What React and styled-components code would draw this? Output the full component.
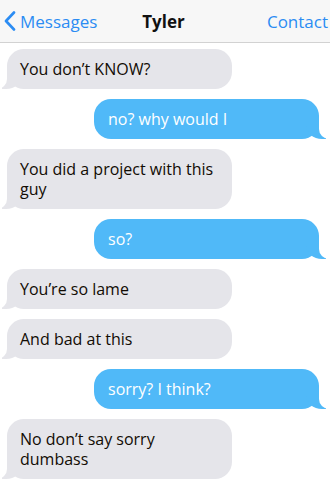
import React from "react";
import styled, { createGlobalStyle, css } from "styled-components";

const Global = createGlobalStyle`
  body {
    margin: 0;
    background: #fff;
    font-family: "Open Sans", "Noto Sans", sans-serif;
  }
`;

const Screen = styled.div`
  width: 330px;
  height: 486px;
  overflow: hidden;
  background: #fff;
`;

const Header = styled.header`
  height: 42px;
  display: flex;
  align-items: center;
  justify-content: space-between;
  background: #f7f7f7;
  border-bottom: 1px solid #d2d2d2;
  position: relative;
  font-size: 17px;
`;

const Back = styled.div`
  display: flex;
  align-items: center;
  gap: 4px;
  padding-left: 4px;
  color: #2b8cf3;
`;

const Title = styled.div`
  position: absolute;
  left: 0;
  right: 0;
  text-align: center;
  font-weight: 700;
  color: #111;
  pointer-events: none;
  padding-right: 3px;
`;

const Contact = styled.div`
  color: #2b8cf3;
  padding-right: 2px;
  white-space: nowrap;
`;

const Thread = styled.div`
  display: flex;
  flex-direction: column;
  gap: 10px;
  padding: 6px 11px 0 7px;
`;

const Bubble = styled.div`
  position: relative;
  width: 225px;
  box-sizing: border-box;
  padding: 10px 13px 10px 13px;
  font-size: 16px;
  line-height: 20px;
  border-radius: 17px;
  z-index: 0;

  &::before,
  &::after {
    content: "";
    position: absolute;
    bottom: 0;
    height: 20px;
    z-index: -1;
  }

  ${(p) =>
    p.$me
      ? css`
          align-self: flex-end;
          background: #50b9f8;
          color: #fff;
          padding-left: 14px;
          &::before {
            right: -7px;
            width: 20px;
            background: #50b9f8;
            border-bottom-left-radius: 16px 14px;
          }
          &::after {
            right: -10px;
            width: 10px;
            background: #fff;
            border-bottom-left-radius: 10px;
          }
        `
      : css`
          align-self: flex-start;
          background: #e5e5ea;
          color: #120c04;
          &::before {
            left: -5px;
            width: 20px;
            background: #e5e5ea;
            border-bottom-right-radius: 16px 14px;
          }
          &::after {
            left: -10px;
            width: 10px;
            background: #fff;
            border-bottom-right-radius: 10px;
          }
        `}
`;

const messages = [
  { me: false, text: "You don\u2019t KNOW?" },
  { me: true, text: "no? why would I" },
  { me: false, text: "You did a project with this guy" },
  { me: true, text: "so?" },
  { me: false, text: "You\u2019re so lame" },
  { me: false, text: "And bad at this" },
  { me: true, text: "sorry? I think?" },
  { me: false, text: "No don\u2019t say sorry dumbass" },
];

const App = () => {
  return (
    <Screen>
      <Global />
      <Header>
        <Back>
          <svg width="12" height="20" viewBox="0 0 12 20">
            <polyline
              points="10,1.5 2,10 10,18.5"
              fill="none"
              stroke="#2b8cf3"
              strokeWidth="2.6"
              strokeLinecap="round"
              strokeLinejoin="round"
            />
          </svg>
          <span>Messages</span>
        </Back>
        <Title>Tyler</Title>
        <Contact>Contact</Contact>
      </Header>
      <Thread>
        {messages.map((m, i) => (
          <Bubble key={i} $me={m.me}>
            {m.text}
          </Bubble>
        ))}
      </Thread>
    </Screen>
  );
};

export default App;
